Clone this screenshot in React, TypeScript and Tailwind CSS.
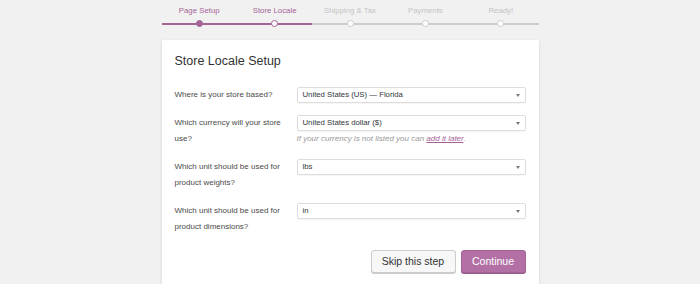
const steps = [
  { label: "Page Setup", state: "done" },
  { label: "Store Locale", state: "active" },
  { label: "Shipping & Tax", state: "todo" },
  { label: "Payments", state: "todo" },
  { label: "Ready!", state: "todo" },
];

const fields = [
  { label: ["Where is your store based?"], value: "United States (US) — Florida" },
  { label: ["Which currency will your store", "use?"], value: "United States dollar ($)", help: true },
  { label: ["Which unit should be used for", "product weights?"], value: "lbs" },
  { label: ["Which unit should be used for", "product dimensions?"], value: "in" },
];

const Select = ({ value }: { value: string }) => (
  <div className="flex h-[16px] items-center justify-between rounded-[2px] border border-[#dddddd] bg-white pl-[5px] pr-[5px] shadow-[0_1px_1px_rgba(0,0,0,0.04)]">
    <span className="text-[7.75px] leading-none text-[#32373c]">{value}</span>
    <span className="h-0 w-0 border-x-[2.5px] border-t-[3px] border-x-transparent border-t-[#777]" />
  </div>
);

export default function App() {
  return (
    <div className="h-[284px] overflow-hidden bg-[#f1f1f1] font-['Liberation_Sans',Arial,sans-serif]">
      <div className="mx-auto w-[377px]">
        <ol className="flex pt-[5px]">
          {steps.map((step) => {
            const purple = step.state !== "todo";
            return (
              <li key={step.label} className="flex flex-1 flex-col items-center">
                <span
                  className={
                    purple
                      ? "h-[12px] text-[7.8px] leading-[12px] text-[#a46497]"
                      : "h-[12px] text-[7.8px] leading-[12px] text-[#c4c4c4]"
                  }
                >
                  {step.label}
                </span>
                <div className="relative mt-[3px] flex h-[7px] w-full items-center justify-center">
                  <div
                    className={
                      purple
                        ? "absolute inset-x-0 top-[2.5px] h-[2px] bg-[#a46497]"
                        : "absolute inset-x-0 top-[2.5px] h-[2px] bg-[#cccccc]"
                    }
                  />
                  <div
                    className={
                      step.state === "done"
                        ? "relative h-[7px] w-[7px] rounded-full border-[1.5px] border-[#a46497] bg-[#a46497]"
                        : step.state === "active"
                          ? "relative h-[7px] w-[7px] rounded-full border-[1.5px] border-[#a46497] bg-white"
                          : "relative h-[7px] w-[7px] rounded-full border-[1.5px] border-[#cccccc] bg-white"
                    }
                  />
                </div>
              </li>
            );
          })}
        </ol>

        <div className="mt-[13px] bg-white px-[13px] pt-[12px] pb-[20px] shadow-[0_1px_3px_rgba(0,0,0,0.13)]">
          <h1 className="text-[12.5px] leading-[18px] text-[#333]">Store Locale Setup</h1>

          <div className="mt-[17px] flex flex-col gap-[12px]">
            {fields.map((f) => (
              <div key={f.label.join(" ")} className="grid grid-cols-[122px_1fr]">
                <div className="text-[8px] leading-[16px] text-[#4a4a4a]">
                  {f.label.map((line) => (
                    <div key={line}>{line}</div>
                  ))}
                </div>
                <div>
                  <Select value={f.value} />
                  {f.help && (
                    <p className="mt-[2px] text-[8px] italic leading-[12px] text-[#999]">
                      If your currency is not listed you can{" "}
                      <a className="text-[#a46497] underline">add it later</a>.
                    </p>
                  )}
                </div>
              </div>
            ))}
          </div>

          <div className="mt-[15px] flex justify-end gap-[5px]">
            <button className="h-[23px] w-[85px] rounded-[3px] border border-[#cccccc] bg-[#f7f7f7] text-[10.5px] text-[#333] shadow-[0_1px_0_#ccc]">
              Skip this step
            </button>
            <button className="h-[23px] w-[65px] rounded-[3px] border border-[#a46497] bg-[#b270a5] text-[10.5px] text-white shadow-[0_1px_0_#95598a]">
              Continue
            </button>
          </div>
        </div>
      </div>
    </div>
  );
}
